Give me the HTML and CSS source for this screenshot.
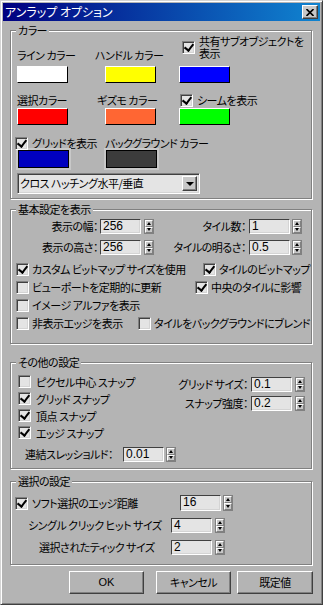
FILE: index.html
```html
<!DOCTYPE html>
<html lang="ja">

<head>
    <meta charset="UTF-8">
    <meta name="viewport" content="width=device-width, initial-scale=1.0">
    <title>アンラップ オプション</title>
    <link rel="stylesheet" href="styles.css">
</head>

<body>
    <div class="window">
        <div class="titlebar">
            <span class="title">アンラップ オプション</span>
            <span class="close">
                <svg width="8" height="7" viewBox="0 0 8 7"><path d="M0.5 0 L7.5 7 M7.5 0 L0.5 7" stroke="#000" stroke-width="1.6"/></svg>
            </span>
        </div>

        <!-- カラー -->
        <div class="group g-color">
            <div class="legend">カラー</div>
            <div class="row c-r1">
                <span class="c-lbl w78">ライン カラー</span>
                <span class="c-lbl w85">ハンドル カラー</span>
                <label class="check shared">
                    <span class="box on"></span>
                    <span class="lines"><span>共有サブオブジェクトを</span><span>表示</span></span>
                </label>
            </div>
            <div class="row sw-row">
                <span class="swatch white"></span>
                <span class="swatch yellow m37"></span>
                <span class="swatch blue m23"></span>
            </div>
            <div class="row c-r2">
                <span class="c-lbl w80">選択カラー</span>
                <span class="c-lbl w83">ギズモ カラー</span>
                <label class="check"><span class="box on"></span><span>シームを表示</span></label>
            </div>
            <div class="row sw-row2">
                <span class="swatch red"></span>
                <span class="swatch orange m37"></span>
                <span class="swatch green m23"></span>
            </div>
            <div class="row c-r3">
                <label class="check w90"><span class="box on"></span><span>グリッドを表示</span></label>
                <span class="c-lbl">バックグラウンド カラー</span>
            </div>
            <div class="row sw-row3">
                <span class="swatch framed navy"></span>
                <span class="swatch framed dark m37"></span>
            </div>
            <div class="select">
                <span class="select-text">クロス ハッチング水平/垂直</span>
                <span class="select-btn"><i class="tri-down"></i></span>
            </div>
        </div>

        <!-- 基本設定を表示 -->
        <div class="group g-basic">
            <div class="legend">基本設定を表示</div>
            <div class="row field-row first">
                <span class="f-lbl w87">表示の幅：</span>
                <span class="input ml2">256</span>
                <span class="spin ml3"><i class="up"></i><i class="down"></i></span>
                <span class="f-lbl w92">タイル数：</span>
                <span class="input ml3">1</span>
                <span class="spin ml2"><i class="up"></i><i class="down"></i></span>
            </div>
            <div class="row field-row second">
                <span class="f-lbl w87">表示の高さ：</span>
                <span class="input ml2">256</span>
                <span class="spin ml3"><i class="up"></i><i class="down"></i></span>
                <span class="f-lbl w92">タイルの明るさ：</span>
                <span class="input ml3">0.5</span>
                <span class="spin ml2"><i class="up"></i><i class="down"></i></span>
            </div>
            <div class="checks">
                <div class="row check-row">
                    <label class="check w187"><span class="box on"></span><span>カスタム ビットマップ サイズを使用</span></label>
                    <label class="check"><span class="box on"></span><span>タイルのビットマップ</span></label>
                </div>
                <div class="row check-row">
                    <label class="check w179"><span class="box"></span><span>ビューポートを定期的に更新</span></label>
                    <label class="check"><span class="box on"></span><span>中央のタイルに影響</span></label>
                </div>
                <div class="row check-row">
                    <label class="check"><span class="box"></span><span>イメージ アルファを表示</span></label>
                </div>
                <div class="row check-row">
                    <label class="check w122"><span class="box"></span><span>非表示エッジを表示</span></label>
                    <label class="check"><span class="box"></span><span>タイルをバックグラウンドにブレンド</span></label>
                </div>
            </div>
        </div>

        <!-- その他の設定 -->
        <div class="group g-other">
            <div class="legend">その他の設定</div>
            <div class="row other-main">
                <div class="snaps">
                    <label class="check snap"><span class="box"></span><span>ピクセル中心 スナップ</span></label>
                    <label class="check snap"><span class="box on"></span><span>グリッド スナップ</span></label>
                    <label class="check snap"><span class="box on"></span><span>頂点 スナップ</span></label>
                    <label class="check snap"><span class="box on"></span><span>エッジ スナップ</span></label>
                </div>
                <div class="snap-fields">
                    <div class="row field">
                        <span class="f-lbl w87">グリッド サイズ：</span>
                        <span class="input ml3">0.1</span>
                        <span class="spin ml3"><i class="up"></i><i class="down"></i></span>
                    </div>
                    <div class="row field next">
                        <span class="f-lbl w87">スナップ強度：</span>
                        <span class="input ml3">0.2</span>
                        <span class="spin ml3"><i class="up"></i><i class="down"></i></span>
                    </div>
                </div>
            </div>
            <div class="row weld">
                <span class="plain w98">連結スレッショルド：</span>
                <span class="input">0.01</span>
                <span class="spin ml2"><i class="up"></i><i class="down"></i></span>
            </div>
        </div>

        <!-- 選択の設定 -->
        <div class="group g-select">
            <div class="legend">選択の設定</div>
            <div class="row sel-r1">
                <label class="check w165"><span class="box on"></span><span>ソフト選択のエッジ距離</span></label>
                <span class="input tall">16</span>
                <span class="spin tall ml2"><i class="up"></i><i class="down"></i></span>
            </div>
            <div class="row sel-r2">
                <span class="plain w143">シングル クリック ヒット サイズ</span>
                <span class="input">4</span>
                <span class="spin ml3"><i class="up"></i><i class="down"></i></span>
            </div>
            <div class="row sel-r3">
                <span class="plain w132">選択されたティック サイズ</span>
                <span class="input">2</span>
                <span class="spin ml3"><i class="up"></i><i class="down"></i></span>
            </div>
        </div>

        <div class="buttons">
            <a href="javascript:;" class="btn ok">OK</a>
            <a href="javascript:;" class="btn cancel">キャンセル</a>
            <a href="javascript:;" class="btn reset">既定値</a>
        </div>
    </div>
</body>

</html>
```

FILE: styles.css
```css
* {
    margin: 0;
    padding: 0;
    box-sizing: border-box;
    text-decoration: none;
}

body {
    background-color: #b4b4b4;
    color: #000;
    font-family: "Noto Sans CJK JP", sans-serif;
    font-size: 11px;
    letter-spacing: -0.5px;
    font-feature-settings: "palt";
}

.window {
    width: 323px;
    height: 605px;
    padding: 2px;
    background-color: #b4b4b4;
    border: 1px solid;
    border-color: #d4d4d4 #404040 #404040 #d4d4d4;
    box-shadow: inset 1px 1px #fff, inset -1px -1px #808080;
}

.titlebar {
    display: flex;
    align-items: center;
    justify-content: space-between;
    height: 18px;
    background: linear-gradient(to right, #000080, #1084d0);
}

.title {
    padding-left: 2px;
    color: #fff;
    font-size: 12px;
    letter-spacing: 0;
    line-height: 18px;
}

.close {
    display: flex;
    align-items: center;
    justify-content: center;
    width: 16px;
    height: 14px;
    margin-right: 2px;
    background-color: #c8c8c8;
    border: 1px solid;
    border-color: #fff #404040 #404040 #fff;
    box-shadow: inset -1px -1px #808080;
}

/* group boxes */
.group {
    width: 302px;
    margin-left: 7px;
    border: 1px solid #808080;
    box-shadow: inset 1px 1px #fff, 1px 1px #fff;
}

.legend {
    width: max-content;
    height: 13px;
    margin: -7px 0 -6px 5px;
    padding: 0 2px;
    line-height: 13px;
    background-color: #b4b4b4;
}

.row {
    display: flex;
    align-items: center;
}

.g-color {
    height: 169px;
    margin-top: 9px;
}

.g-basic {
    height: 135px;
    margin-top: 10px;
}

.g-other {
    height: 107px;
    margin-top: 18px;
}

.g-select {
    height: 84px;
    margin-top: 12px;
}

/* colour section */
.c-r1 {
    height: 31px;
    align-items: flex-end;
    padding-left: 6px;
}

.c-lbl {
    line-height: 14px;
    white-space: nowrap;
}

.w78 { width: 78px; }
.w80 { width: 80px; }
.w83 { width: 83px; }
.w85 { width: 85px; }
.w87 { width: 87px; }
.w90 { width: 90px; }
.w92 { width: 92px; }
.w98 { width: 98px; }
.w122 { width: 122px; }
.w132 { width: 132px; }
.w143 { width: 143px; }
.w165 { width: 165px; }
.w179 { width: 179px; }
.w187 { width: 187px; }

.ml2 { margin-left: 2px; }
.ml3 { margin-left: 3px; }
.m37 { margin-left: 37px; }
.m23 { margin-left: 23px; }

.shared {
    align-self: flex-start;
    margin-top: 4px;
    margin-left: 2px;
}

.lines {
    display: flex;
    flex-direction: column;
}

.lines span {
    height: 12px;
    line-height: 12px;
}

.sw-row {
    height: 17px;
    margin-top: 4px;
    padding-left: 6px;
}

.c-r2 {
    height: 14px;
    margin-top: 10px;
    padding-left: 6px;
}

.sw-row2 {
    height: 17px;
    margin-top: 1px;
    padding-left: 6px;
}

.c-r3 {
    height: 14px;
    margin-top: 11px;
    padding-left: 4px;
}

.sw-row3 {
    height: 18px;
    margin-top: 0;
    padding-left: 7px;
}

.swatch {
    display: block;
    width: 51px;
    height: 100%;
    border: 1px solid;
    border-color: #fff #000 #000 #fff;
}

.swatch.framed {
    border-color: #000;
    box-shadow: 0 0 0 2px #c8c8c8;
}

.white { background-color: #fff; }
.yellow { background-color: #ffff00; }
.blue { background-color: #0000ff; }
.red { background-color: #ff0000; }
.orange { background-color: #ff6633; }
.green { background-color: #00ff00; }
.navy { background-color: #0000c0; }
.dark { background-color: #3c3c3c; }

.select {
    display: flex;
    align-items: center;
    justify-content: space-between;
    width: 183px;
    height: 21px;
    margin: 5px 0 0 6px;
    padding: 0 2px 0 2px;
    background-color: #e4e4e4;
    border: 1px solid;
    border-color: #808080 #fff #fff #808080;
    box-shadow: inset 1px 1px #404040, inset -1px -1px #d4d4d4;
}

.select-text {
    line-height: 15px;
}

.select-btn {
    display: flex;
    align-items: center;
    justify-content: center;
    width: 15px;
    height: 15px;
    background-color: #c8c8c8;
    border: 1px solid;
    border-color: #fff #404040 #404040 #fff;
    box-shadow: inset -1px -1px #808080;
}

.tri-down {
    display: block;
    border-left: 4px solid transparent;
    border-right: 4px solid transparent;
    border-top: 4px solid #000;
}

/* checkboxes */
.check {
    display: flex;
    align-items: center;
    gap: 4px;
    line-height: 14px;
    white-space: nowrap;
}

.box {
    position: relative;
    flex: none;
    width: 13px;
    height: 13px;
    background-color: #e4e4e4;
    border: 1px solid;
    border-color: #808080 #fff #fff #808080;
    box-shadow: inset 1px 1px #404040, inset -1px -1px #d4d4d4;
}

.box.on::after {
    content: "";
    position: absolute;
    left: 3px;
    top: 0;
    width: 4px;
    height: 7px;
    border-right: 2px solid #000;
    border-bottom: 2px solid #000;
    transform: rotate(38deg);
}

/* numeric fields */
.f-lbl {
    text-align: right;
    line-height: 15px;
    white-space: nowrap;
}

.plain {
    line-height: 15px;
    white-space: nowrap;
}

.input {
    width: 41px;
    height: 15px;
    padding-left: 2px;
    font-family: "Liberation Sans", "Noto Sans CJK JP", sans-serif;
    font-size: 12px;
    letter-spacing: 0;
    line-height: 13px;
    background-color: #e4e4e4;
    border: 1px solid;
    border-color: #404040 #fff #fff #404040;
    box-shadow: inset -1px -1px #d4d4d4;
}

.input.tall {
    height: 16px;
}

.spin {
    display: flex;
    flex-direction: column;
    width: 10px;
    height: 15px;
    border: 1px solid #808080;
}

.spin.tall {
    height: 16px;
}

.spin i {
    flex: 1;
    display: flex;
    align-items: center;
    justify-content: center;
    background-color: #c8c8c8;
    border: 1px solid;
    border-color: #fff #808080 #808080 #fff;
}

.spin i::after {
    content: "";
    border-left: 2px solid transparent;
    border-right: 2px solid transparent;
}

.spin .up::after {
    border-bottom: 3px solid #000;
}

.spin .down::after {
    border-top: 3px solid #000;
}

.field-row {
    height: 15px;
}

.field-row.first {
    margin-top: 9px;
}

.field-row.second {
    margin-top: 6px;
}

.checks {
    margin-top: 5px;
}

.check-row {
    height: 18px;
    padding-left: 5px;
}

.check-row .check {
    gap: 3px;
}

/* other settings */
.other-main {
    align-items: flex-start;
    margin-top: 10px;
}

.snaps {
    width: 150px;
    padding-left: 7px;
}

.snap {
    height: 17px;
    gap: 5px;
}

.snap-fields {
    margin-top: 4px;
}

.field {
    height: 15px;
}

.field.next {
    margin-top: 4px;
}

.weld {
    height: 15px;
    margin-top: 6px;
    padding-left: 14px;
}

/* selection */
.sel-r1 {
    height: 16px;
    margin-top: 13px;
    padding-left: 4px;
}

.sel-r2 {
    height: 15px;
    margin-top: 7px;
    padding-left: 17px;
}

.sel-r3 {
    height: 15px;
    margin-top: 7px;
    padding-left: 28px;
}

/* buttons */
.buttons {
    display: flex;
    margin-top: 6px;
    padding-left: 66px;
}

.btn {
    display: block;
    width: 75px;
    height: 23px;
    color: #000;
    line-height: 21px;
    text-align: center;
    background-color: #b4b4b4;
    border: 1px solid;
    border-color: #fff #404040 #404040 #fff;
    box-shadow: inset -1px -1px #808080;
}

.btn.ok {
    font-family: "Liberation Sans", sans-serif;
    letter-spacing: 0;
}

.btn.cancel {
    margin-left: 12px;
}

.btn.reset {
    width: 76px;
    margin-left: 6px;
}
```
